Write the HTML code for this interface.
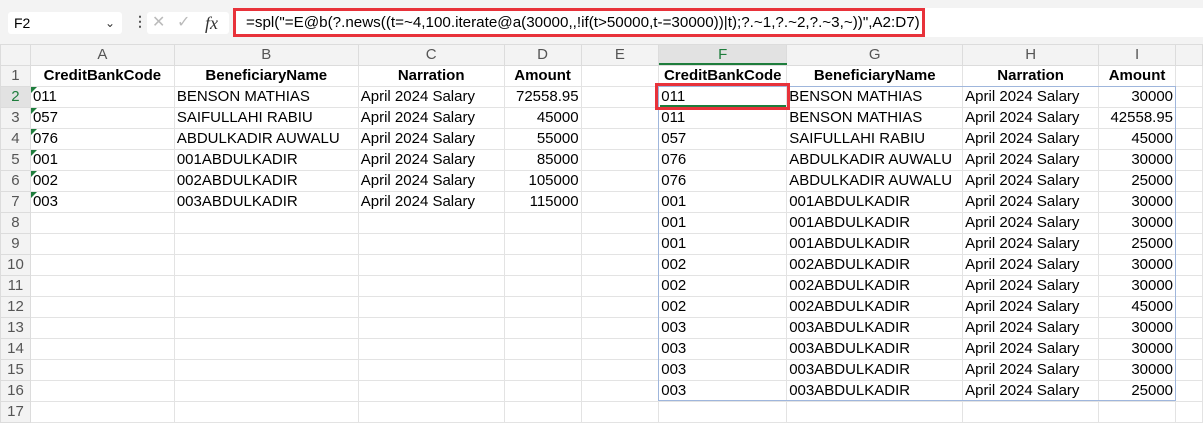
<!DOCTYPE html>
<html><head><meta charset="utf-8"><style>
body{margin:0;width:1203px;height:421px;overflow:hidden;background:#fff;font-family:"Liberation Sans",Arial,sans-serif;position:relative}
.tb{position:absolute;left:0;top:0;width:1203px;height:44px;background:#f3f3f3}
.nb{position:absolute;left:8px;top:12px;width:114px;height:22px;background:#fff;border-radius:3px;font-size:14px;line-height:22px;padding-left:6px;box-sizing:border-box}
.nb span{position:absolute;right:7px;top:0;font-size:12px;color:#333}
.dots{position:absolute;left:133px;top:13px;font-size:14px;color:#555;font-weight:bold}
.btns{position:absolute;left:147px;top:12px;width:82px;height:22px;background:#fff;border-radius:3px;color:#bbb;font-size:16px;line-height:22px}
.fx{position:absolute;left:233px;top:8px;width:970px;height:29px;background:#fff}
.fr{position:absolute;left:233px;top:8px;width:692px;height:29px;border:3px solid #e8323a;box-sizing:border-box;font-size:15.2px;line-height:23px;padding-left:10px;white-space:nowrap}
table{position:absolute;left:0;top:44px;border-collapse:collapse;table-layout:fixed;font-size:15px}
td{height:20px;border:1px solid #e3e3e3;padding:0 2px;white-space:nowrap;overflow:hidden;line-height:20px}
tr.h td{background:#f3f3f3;text-align:center;color:#555;font-size:15px;border-color:#dcdcdc}
td.r{background:#f3f3f3;text-align:center;color:#555;border-color:#dcdcdc;padding:0}
tr.b td:not(.r){font-weight:bold;text-align:center}
td.n{text-align:right}
td.g{position:relative}
td.g:before{content:"";position:absolute;left:0;top:0;border-top:6px solid #1e7d3c;border-right:6px solid transparent}
.blue{position:absolute;left:658px;top:86px;width:518px;height:315px;border:1px solid #9fb6dc;box-sizing:border-box;pointer-events:none}
.red{position:absolute;left:655px;top:83px;width:135px;height:27px;border:3px solid #e8323a;box-sizing:border-box}
.grn{position:absolute;left:660px;top:105px;width:126px;height:2px;background:#1e7d3c}
.fh{position:absolute;left:659px;top:63px;width:128px;height:2px;background:#1e7d3c}
</style></head><body>
<div class="tb"></div>
<div class="nb">F2<span>&#8964;</span></div>
<div class="dots">&#8942;</div>
<div class="btns"><span style="position:absolute;left:5px">&#10005;</span><span style="position:absolute;left:30px">&#10003;</span><span style="position:absolute;left:58px;color:#333;font-family:'Liberation Serif',serif;font-style:italic;font-size:18px">fx</span></div>
<div class="fx"></div>
<div class="fr">=spl("=E@b(?.news((t=~4,100.iterate@a(30000,,!if(t&gt;50000,t-=30000))|t);?.~1,?.~2,?.~3,~))",A2:D7)</div>
<table>
<colgroup><col style="width:30px"><col style="width:144px"><col style="width:184px"><col style="width:146px"><col style="width:77px"><col style="width:78px"><col style="width:128px"><col style="width:176px"><col style="width:136px"><col style="width:77px"><col style="width:27px"></colgroup>
<tr class="h"><td></td><td>A</td><td>B</td><td>C</td><td>D</td><td>E</td><td style="background:#e2e2e2;color:#1e7d3c">F</td><td>G</td><td>H</td><td>I</td><td></td></tr>
<tr class="b"><td class="r">1</td><td>CreditBankCode</td><td>BeneficiaryName</td><td>Narration</td><td>Amount</td><td></td><td>CreditBankCode</td><td>BeneficiaryName</td><td>Narration</td><td>Amount</td><td></td></tr>
<tr><td class="r" style="background:#e2e2e2;color:#1e7d3c">2</td><td class="g">011</td><td>BENSON MATHIAS</td><td>April 2024 Salary</td><td class="n">72558.95</td><td></td><td>011</td><td>BENSON MATHIAS</td><td>April 2024 Salary</td><td class="n">30000</td><td></td></tr>
<tr><td class="r">3</td><td class="g">057</td><td>SAIFULLAHI RABIU</td><td>April 2024 Salary</td><td class="n">45000</td><td></td><td>011</td><td>BENSON MATHIAS</td><td>April 2024 Salary</td><td class="n">42558.95</td><td></td></tr>
<tr><td class="r">4</td><td class="g">076</td><td>ABDULKADIR AUWALU</td><td>April 2024 Salary</td><td class="n">55000</td><td></td><td>057</td><td>SAIFULLAHI RABIU</td><td>April 2024 Salary</td><td class="n">45000</td><td></td></tr>
<tr><td class="r">5</td><td class="g">001</td><td>001ABDULKADIR</td><td>April 2024 Salary</td><td class="n">85000</td><td></td><td>076</td><td>ABDULKADIR AUWALU</td><td>April 2024 Salary</td><td class="n">30000</td><td></td></tr>
<tr><td class="r">6</td><td class="g">002</td><td>002ABDULKADIR</td><td>April 2024 Salary</td><td class="n">105000</td><td></td><td>076</td><td>ABDULKADIR AUWALU</td><td>April 2024 Salary</td><td class="n">25000</td><td></td></tr>
<tr><td class="r">7</td><td class="g">003</td><td>003ABDULKADIR</td><td>April 2024 Salary</td><td class="n">115000</td><td></td><td>001</td><td>001ABDULKADIR</td><td>April 2024 Salary</td><td class="n">30000</td><td></td></tr>
<tr><td class="r">8</td><td></td><td></td><td></td><td></td><td></td><td>001</td><td>001ABDULKADIR</td><td>April 2024 Salary</td><td class="n">30000</td><td></td></tr>
<tr><td class="r">9</td><td></td><td></td><td></td><td></td><td></td><td>001</td><td>001ABDULKADIR</td><td>April 2024 Salary</td><td class="n">25000</td><td></td></tr>
<tr><td class="r">10</td><td></td><td></td><td></td><td></td><td></td><td>002</td><td>002ABDULKADIR</td><td>April 2024 Salary</td><td class="n">30000</td><td></td></tr>
<tr><td class="r">11</td><td></td><td></td><td></td><td></td><td></td><td>002</td><td>002ABDULKADIR</td><td>April 2024 Salary</td><td class="n">30000</td><td></td></tr>
<tr><td class="r">12</td><td></td><td></td><td></td><td></td><td></td><td>002</td><td>002ABDULKADIR</td><td>April 2024 Salary</td><td class="n">45000</td><td></td></tr>
<tr><td class="r">13</td><td></td><td></td><td></td><td></td><td></td><td>003</td><td>003ABDULKADIR</td><td>April 2024 Salary</td><td class="n">30000</td><td></td></tr>
<tr><td class="r">14</td><td></td><td></td><td></td><td></td><td></td><td>003</td><td>003ABDULKADIR</td><td>April 2024 Salary</td><td class="n">30000</td><td></td></tr>
<tr><td class="r">15</td><td></td><td></td><td></td><td></td><td></td><td>003</td><td>003ABDULKADIR</td><td>April 2024 Salary</td><td class="n">30000</td><td></td></tr>
<tr><td class="r">16</td><td></td><td></td><td></td><td></td><td></td><td>003</td><td>003ABDULKADIR</td><td>April 2024 Salary</td><td class="n">25000</td><td></td></tr>
<tr><td class="r">17</td><td></td><td></td><td></td><td></td><td></td><td></td><td></td><td></td><td></td><td></td></tr>
</table>
<div class="blue"></div>
<div class="fh"></div>
<div class="grn"></div>
<div class="red"></div>
</body></html>
